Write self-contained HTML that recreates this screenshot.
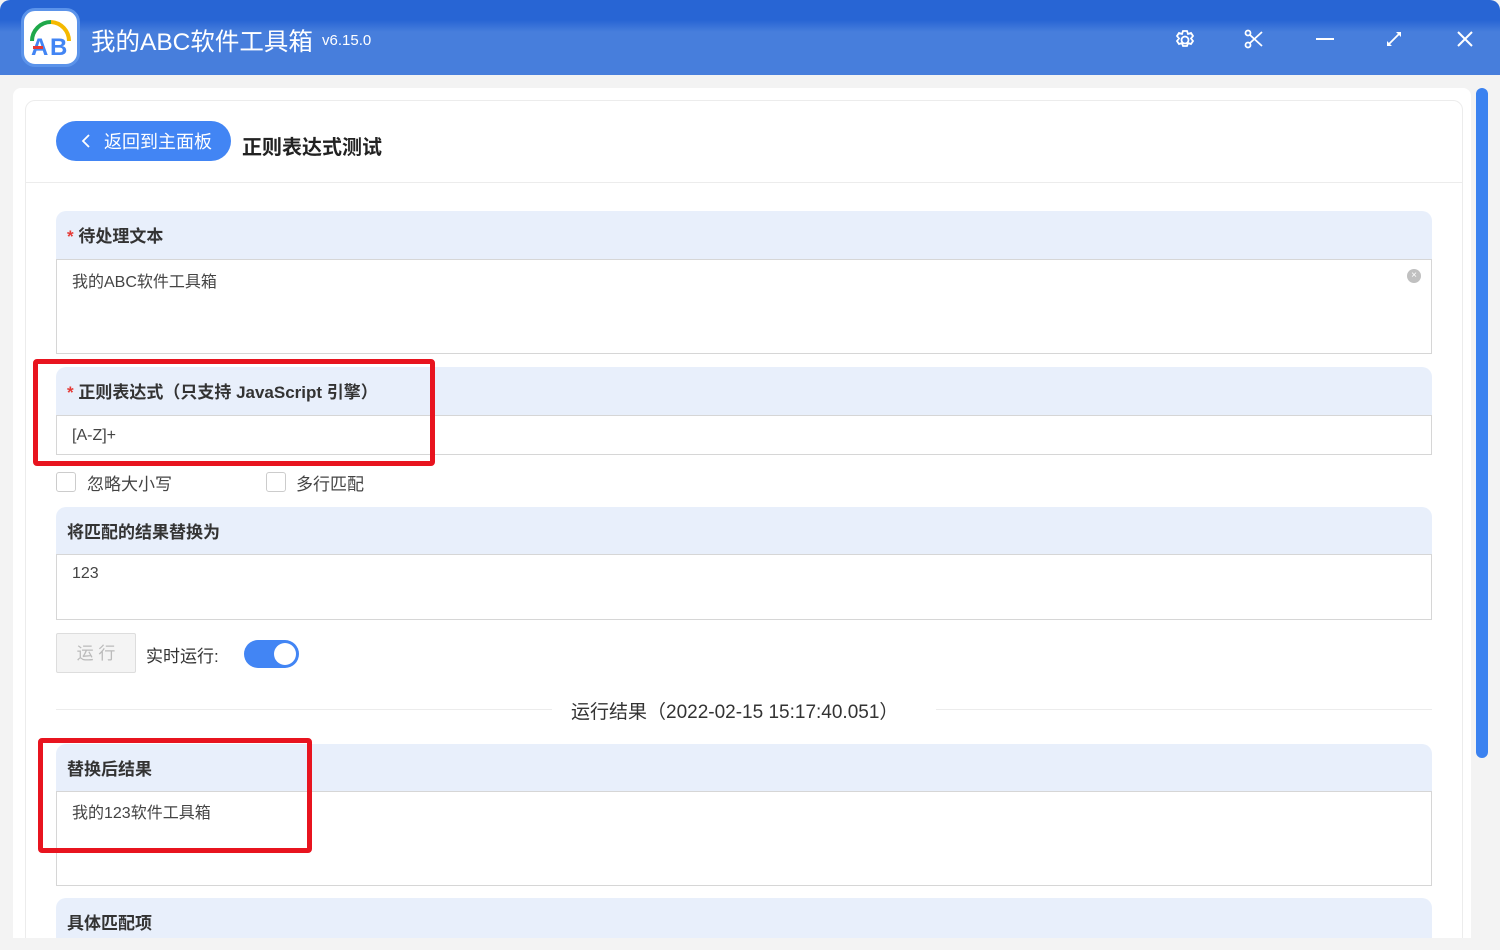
<!DOCTYPE html><html><head><meta charset="utf-8"><style>
*{box-sizing:border-box;margin:0;padding:0}
body{width:1500px;height:950px;overflow:hidden;background:#f3f3f3;font-family:"Liberation Sans","Noto Sans CJK SC",sans-serif;position:relative;color:#333}
.tb{position:absolute;left:0;top:0;width:1500px;height:75px;background:linear-gradient(#2865d4 0,#2865d4 20px,#477edc 32px,#477edc);border-radius:10px 10px 0 0}
.a{position:absolute}
.lab{position:absolute;left:56px;width:1376px;background:#e8effb;border-radius:10px 10px 0 0;font-size:17px;font-weight:bold;padding-left:11px;color:#333}
.box{position:absolute;left:56px;width:1376px;background:#fff;border:1px solid #d6d6d6;font-size:16px;color:#444;padding:8px 15px}
.red{position:absolute;border:5px solid #e8141f;border-radius:4px}
.cb{position:absolute;width:20px;height:20px;border:1px solid #ccc;border-radius:3px;background:#fff}
</style></head><body>
<div class="tb"></div>
<div class="a" style="left:21px;top:8px;width:59px;height:59px;border-radius:14px;background:#fff;border:3px solid #5b93ea"><svg width="53" height="53" viewBox="0 0 53 53"><path d="M8 30 A19 19 0 0 1 27 11" stroke="#1fa84a" stroke-width="4" fill="none"/><path d="M27 11 A19 19 0 0 1 45 30" stroke="#f5b900" stroke-width="4" fill="none"/><text x="7" y="44" font-size="24" font-family="Liberation Sans" fill="#4285f4" font-weight="bold">A</text><text x="26" y="44" font-size="24" font-family="Liberation Sans" fill="#4285f4" font-weight="bold">B</text><rect x="9" y="35" width="10" height="3" fill="#e53935"/></svg></div>
<div class="a" style="left:91px;top:23px;font-size:24.5px;color:#fff;white-space:nowrap">我的ABC软件工具箱</div>
<div class="a" style="left:322px;top:32px;font-size:15px;color:#fff">v6.15.0</div>
<svg class="a" style="left:1170px;top:25px" width="30" height="30" viewBox="0 0 30 30" fill="none" stroke="#fff" stroke-width="1.8"><circle cx="15" cy="15" r="3.5"/><path d="M13 6h4l1 3 3-1 2 3-2 2.5 2 2.5-2 3-3-1-1 3h-4l-1-3-3 1-2-3 2-2.5-2-2.5 2-3 3 1z"/></svg>
<svg class="a" style="left:1242px;top:27px" width="26" height="26" viewBox="0 0 26 26" fill="none" stroke="#fff" stroke-width="1.8"><circle cx="6" cy="6" r="2.5"/><circle cx="6" cy="18" r="2.5"/><path d="M8 8l12 11M8 16L20 5"/></svg>
<div class="a" style="left:1316px;top:38px;width:18px;height:2px;background:#fff"></div>
<svg class="a" style="left:1384px;top:29px" width="20" height="20" viewBox="0 0 20 20" stroke="#fff" stroke-width="1.8" fill="#fff"><path d="M4 16L16 4"/><path d="M12 3h5v5z M3 12v5h5z" stroke="none"/></svg>
<svg class="a" style="left:1456px;top:30px" width="18" height="18" stroke="#fff" stroke-width="2"><path d="M2 2L16 16M16 2L2 16"/></svg>
<div class="a" style="left:13px;top:88px;width:1458px;height:862px;background:#fff;border-radius:8px"></div>
<div class="a" style="left:25px;top:100px;width:1438px;height:850px;border:1px solid #ececec;border-radius:10px"></div>
<div class="a" style="left:26px;top:182px;width:1436px;height:1px;background:#ececec"></div>
<div class="a" style="left:1476px;top:88px;width:12px;height:670px;background:#3b82f0;border-radius:6px"></div>
<div class="a" style="left:56px;top:121px;width:175px;height:40px;border-radius:20px;background:#4285f4;color:#fff;font-size:18px;line-height:42px;padding-left:48px">返回到主面板</div>
<svg class="a" style="left:80px;top:133px" width="12" height="16" stroke="#fff" stroke-width="1.8" fill="none"><path d="M9 2L3 8l6 6"/></svg>
<div class="a" style="left:242px;top:131px;font-size:20px;font-weight:bold;color:#222">正则表达式测试</div>

<div class="lab" style="top:211px;height:49px;line-height:52px"><span style="color:#e53935">* </span>待处理文本</div>
<div class="box" style="top:259px;height:95px">我的ABC软件工具箱</div>
<div class="a" style="left:1407px;top:269px;width:14px;height:14px;border-radius:7px;background:#c0c0c0;color:#fff;font-size:10px;text-align:center;line-height:14px">×</div>

<div class="lab" style="top:367px;height:49px;line-height:52px"><span style="color:#e53935">* </span>正则表达式（只支持 JavaScript 引擎）</div>
<div class="box" style="top:415px;height:40px;padding-top:11px">[A-Z]+</div>
<div class="red" style="left:33px;top:359px;width:402px;height:107px"></div>
<div class="cb" style="left:56px;top:472px"></div><div class="a" style="left:87px;top:470px;font-size:17px;color:#444">忽略大小写</div>
<div class="cb" style="left:266px;top:472px"></div><div class="a" style="left:296px;top:470px;font-size:17px;color:#444">多行匹配</div>

<div class="lab" style="top:507px;height:48px;line-height:52px">将匹配的结果替换为</div>
<div class="box" style="top:554px;height:66px;padding-top:10px">123</div>
<div class="a" style="left:56px;top:633px;width:80px;height:40px;background:#f4f4f4;border:1px solid #ddd;border-radius:2px;color:#bbb;font-size:17px;text-align:center;line-height:40px">运 行</div>
<div class="a" style="left:146px;top:642px;font-size:17px;color:#333">实时运行:</div>
<div class="a" style="left:244px;top:640px;width:55px;height:28px;border-radius:14px;background:#4285f4"><div style="position:absolute;right:3px;top:3px;width:22px;height:22px;border-radius:11px;background:#fff"></div></div>
<div class="a" style="left:56px;top:709px;width:496px;height:1px;background:#ececec"></div>
<div class="a" style="left:936px;top:709px;width:496px;height:1px;background:#ececec"></div>
<div class="a" style="left:571px;top:697px;font-size:19px;color:#333">运行结果（2022-02-15 15:17:40.051）</div>

<div class="lab" style="top:744px;height:48px;line-height:52px">替换后结果</div>
<div class="box" style="top:791px;height:95px;padding-top:7px">我的123软件工具箱</div>
<div class="red" style="left:38px;top:738px;width:274px;height:115px"></div>
<div class="lab" style="top:898px;height:48px;line-height:52px">具体匹配项</div>
<div class="a" style="left:0;top:938px;width:1500px;height:12px;background:#f3f3f3"></div>
</body></html>
